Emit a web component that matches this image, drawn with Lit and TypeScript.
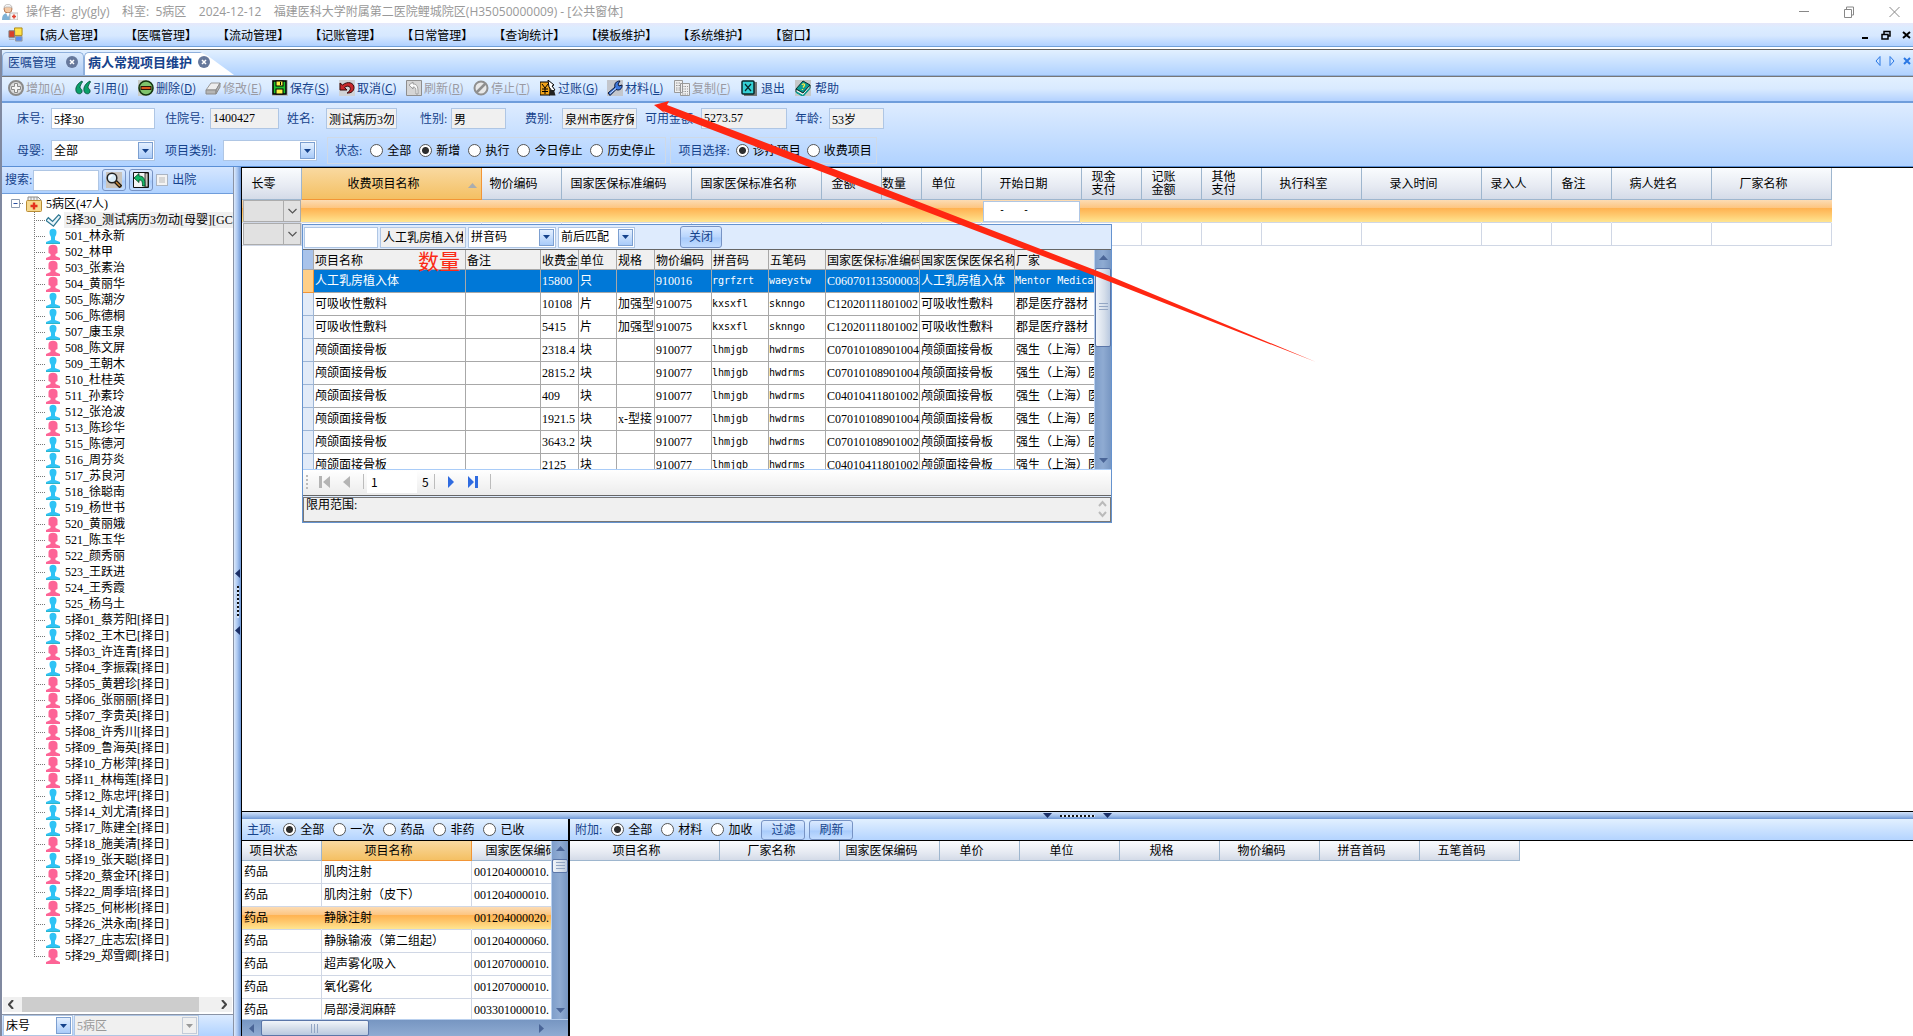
import { LitElement, html, svg, css, nothing } from "lit";
import { customElement } from "lit/decorators.js";
import { classMap } from "lit/directives/class-map.js";
import { styleMap } from "lit/directives/style-map.js";

interface Column { title: string; width: number; sorted?: boolean }

const MENUS = ["病人管理", "医嘱管理", "流动管理", "记账管理", "日常管理", "查询统计", "模板维护", "系统维护", "窗口"];

const TOOLS: { icon: string; text: string; key?: string; off?: boolean; size?: string }[] = [
  { icon: "add", text: "增加", key: "A", off: true },
  { icon: "quote", text: "引用", key: "I", size: "narrow" },
  { icon: "remove", text: "删除", key: "D" },
  { icon: "edit", text: "修改", key: "E", off: true },
  { icon: "save", text: "保存", key: "S" },
  { icon: "undo", text: "取消", key: "C" },
  { icon: "reload", text: "刷新", key: "R", off: true },
  { icon: "stop", text: "停止", key: "T", off: true },
  { icon: "post", text: "过账", key: "G" },
  { icon: "wrench", text: "材料", key: "L" },
  { icon: "copy", text: "复制", key: "F", off: true },
  { icon: "exit", text: "退出", size: "short" },
  { icon: "help", text: "帮助", size: "short" },
];

const ICONS: Record<string, unknown> = {
  add: svg`<circle cx="8" cy="8" r="7" fill="#dcdcdc" stroke="#8a8a8a" stroke-width="2"/><path d="M6.5 3.5h3v3h3v3h-3v3h-3v-3h-3v-3h3z" fill="#f4f4f4" stroke="#8a8a8a"/>`,
  quote: svg`<path d="M7 1C3 3 0 7 1 11c.5 3 5 4 6 1 .6-2-1-3.500-2-4 0-2 1-4 2.500-6z" fill="#0aa06a" stroke="#064d38" stroke-width=".8"/><path d="M15 1c-4 2-7 6-6 10 .5 3 5 4 6 1 .6-2-1-3.500-2-4 0-2 1-4 2.500-6z" fill="#0aa06a" stroke="#064d38" stroke-width=".8"/>`,
  remove: svg`<rect width="9" height="16" fill="#c8ccc8"/><circle cx="8" cy="8" r="7" fill="#7fc36c" stroke="#14350f" stroke-width="1.600"/><rect x="3" y="6.500" width="10" height="3" fill="#d8571c" stroke="#2b1408"/>`,
  edit: svg`<path d="M1 10l5-7h9l-4 7z" fill="#eee" stroke="#999"/><path d="M1 10h10v4H1zM11 10l4-7v4l-4 7z" fill="#b5b5b5" stroke="#8b8b8b"/>`,
  save: svg`<rect width="16" height="16" fill="#b9bcc0"/><path d="M1 1h13v13H1z" fill="#1fc02c" stroke="#000" stroke-width="1.500"/><rect x="4" y="1" width="7" height="5" fill="#fff34a" stroke="#000"/><rect x="4" y="9" width="7" height="5" fill="#fff34a" stroke="#000"/><path d="M8.500 2v3" stroke="#000"/>`,
  undo: svg`<rect width="16" height="16" fill="#cfd2d6"/><path d="M1 3v7h7L5.500 7.500C9 4.500 12.500 7 11 10c-.6 1.500-2 2.500-3 3 4 .5 7-2 7-5.500C15 3 9 .5 3.500 5z" fill="#c7282c" stroke="#35080a"/>`,
  reload: svg`<path d="M.5.5h15v15H.5z" fill="#d5d5d5" stroke="#8e8e8e"/><path d="M3 5l4-3v2c5 0 5 4 5 10h-2c0-5 0-7-3-7v2z" fill="#fafafa" stroke="#8e8e8e" stroke-width=".8"/>`,
  stop: svg`<circle cx="8" cy="8" r="6.500" fill="#e8e8e8" stroke="#8f8f8f" stroke-width="2"/><path d="M3.500 12.500l9-9" stroke="#8f8f8f" stroke-width="2.500"/>`,
  post: svg`<path d="M0 2h10v13H0z" fill="#f0a31b" stroke="#000"/><path d="M2 4l3 4 3-4M2 9h6M2 11.500h6M5 8v6" stroke="#000" fill="none"/><path d="M8 0l6 5-2 1 3 4-3 1-3-4z" fill="#fff" stroke="#000"/><path d="M10 10h4l1.500 5.500H9z" fill="#222"/>`,
  wrench: svg`<rect width="16" height="16" fill="#c3c6cc"/><path d="M1 13l7-6c-1-3 1-6 5-6l-2 3 1 2 3-1c.5 4-3 6-6 4.500L3 15.500z" fill="#3f79dc" stroke="#0a1536"/><path d="M3 13.500l6-5" stroke="#cfe2ff"/>`,
  copy: svg`<path d="M.5.5h8v12h-8zM6.500 3.500h9v12h-9z" fill="#efefef" stroke="#999"/><path d="M2 3h5M2 5.500h4M2 8h4M2 10h4M8 6.500h6M8 9h6M8 11.500h6M8 14h6" stroke="#999" stroke-dasharray="1.500 1"/>`,
  exit: svg`<rect x="3" y="2" width="13" height="14" fill="#777"/><rect x="1" y="1" width="12" height="13" rx="1" fill="#35d0d6" stroke="#07282b" stroke-width="1.500"/><path d="M4 4l6 7M10 4l-6 7" stroke="#07282b" stroke-width="1.200"/>`,
  help: svg`<rect width="16" height="16" fill="#c6c9c9"/><path d="M1 9l7-8 7 4-7 8z" fill="#0c9d93" stroke="#04312e"/><path d="M1 9v3l7 4 7-8V5l-7 8z" fill="#f2f2f2" stroke="#04312e"/><path d="M1 12l7 4 7-8" stroke="#0c9d93" stroke-width="1.500" fill="none"/><path d="M7 5c1-2 3-1 2.500.5L8 7.500M7.500 9v1" stroke="#ffe840" stroke-width="1.300" fill="none"/>`,
  nurse: svg`<circle cx="6" cy="5" r="4" fill="#f3c9a5" stroke="#b97b55"/><path d="M2 4c0-5 8-5 8 0L8 3H4z" fill="#f5f5f5" stroke="#aaa" stroke-width=".6"/><path d="M0 16c0-5 2-7 6-7s5 2 6 7z" fill="#7fb2d6"/><path d="M4 9l2 4 2-4z" fill="#fff"/><rect x="8" y="9" width="8" height="7" fill="#f4f4f4" stroke="#b9b9b9"/><path d="M12 10.500v4M10 12.500h4" stroke="#e0402e" stroke-width="1.600"/>`,
  forms: svg`<path d="M7 1h8v8H7z" fill="#ffe24a" stroke="#ab8410"/><path d="M1 4h6v7H1z" fill="#d8402a" stroke="#7d7d7d"/><path d="M8 10h7v5H8z" fill="#5a8ef0" stroke="#9a9a9a"/><path d="M1 13h6" stroke="#9a9a9a"/>`,
  search: svg`<rect width="16" height="16" fill="#c9c4bd"/><path d="M9 9l6 6" stroke="#221b12" stroke-width="4"/><path d="M10 10l4 4" stroke="#c98b3b" stroke-width="1.500"/><circle cx="6" cy="6" r="4.800" fill="#d8ecf8" stroke="#222" stroke-width="1.500"/><path d="M3.500 6.500c0-2 1.500-3 3-3" stroke="#fff" stroke-width="1.500" fill="none"/>`,
  back: svg`<path d="M.5.5h15v15H.5z" fill="#f4f4f4" stroke="#111"/><path d="M12 1h3v14h-3z" fill="#c9c4bd" stroke="#111" stroke-width=".8"/><path d="M1 6l5-4.500v2.500c5 0 6 3 6 10H9.500C9.500 9.500 9 8 6 8v2.500z" fill="#13b765" stroke="#053d21" stroke-width=".8"/>`,
  ward: svg`<path d="M2 5V1h10l3 3v5" fill="#f1f1f1" stroke="#8a8a8a"/><path d="M5 1v4M8 1v4M11 1v4" stroke="#999"/><rect x=".5" y="4.500" width="15" height="11" rx="1" fill="#f7d98e" stroke="#b98d35"/><path d="M8 6.500v7M4.500 10h7" stroke="#e4311d" stroke-width="2.400"/>`,
  check: svg`<path d="M0 8l2.500-3L7 9l6.500-7L16 4 8 14z" fill="#eaf6fb" stroke="#2c7691" stroke-width="1.300"/>`,
};

const icon = (name: string, size = 16) =>
  html`<svg class="ico" width=${size} height=${size} viewBox="0 0 16 16" aria-hidden="true">${ICONS[name]}</svg>`;

const person = (female: boolean) => female
  ? html`<svg class="ico" width="14" height="16" viewBox="0 0 14 16"><path d="M2.500 8V4C2.500-.5 11.500-.5 11.500 4v5L9.500 10v2l4.500 2V16H0v-2l4.500-2v-2L2.500 9z" fill="#fd6496"/></svg>`
  : html`<svg class="ico" width="14" height="16" viewBox="0 0 14 16"><path d="M3.500 4C3.500-.3 10.500-.3 10.500 4c0 2-.5 3.500-1.500 5v3l5 2v2H0v-2l5-2V9C4 7.500 3.500 6 3.500 4z" fill="#2fc3f5"/><path d="M0 15h14v1H0z" fill="#2fb5c8"/></svg>`;

const tri = (dir: "up" | "down" | "left" | "right", color = "#4a6597") => {
  const d = { up: "M0 6l4.500-5L9 6z", down: "M0 2h9L4.500 7z", left: "M7 0v9L2 4.500z", right: "M2 0v9l5-4.500z" }[dir];
  return html`<svg class="ico" width="9" height="9" viewBox="0 0 9 9"><path d=${d} fill=${color}/></svg>`;
};

const combo = (label: string, value: string, kind: string, disabled = false) => html`
  <span class="combo ${kind}">
    <select aria-label=${label} ?disabled=${disabled}><option>${value}</option></select>
    <span class="drop ${disabled ? "off" : ""}"><svg width="7" height="4" viewBox="0 0 7 4"><path d="M0 0h7L3.500 4z" fill="currentColor"/></svg></span>
  </span>`;

const radios = (name: string, items: string[], on: number) => items.map((t, i) => html`
  <label class="radio"><input type="radio" name=${name} ?checked=${i === on}>${t}</label>`);

const cols = (list: Column[]) => html`<colgroup>${list.map(c => html`<col style=${styleMap({ width: c.width + "px" })}>`)}</colgroup>`;
const total = (list: Column[]) => styleMap({ width: list.reduce((n, c) => n + c.width, 0) + "px" });

const ORDER_COLS: Column[] = [
  { title: "长零", width: 60 }, { title: "收费项目名称", width: 180, sorted: true }, { title: "物价编码", width: 80 },
  { title: "国家医保标准编码", width: 130 }, { title: "国家医保标准名称", width: 130 }, { title: "金额", width: 60 },
  { title: "数量", width: 40 }, { title: "单位", width: 60 }, { title: "开始日期", width: 100 },
  { title: "现金\n支付", width: 60 }, { title: "记账\n金额", width: 60 }, { title: "其他\n支付", width: 60 },
  { title: "执行科室", width: 100 }, { title: "录入时间", width: 120 }, { title: "录入人", width: 70 },
  { title: "备注", width: 60 }, { title: "病人姓名", width: 100 }, { title: "厂家名称", width: 120 },
];
const DATE_COL = 8;

const ITEM_COLS: Column[] = [
  { title: "项目状态", width: 80 }, { title: "项目名称", width: 150, sorted: true }, { title: "国家医保编码", width: 116 },
];
const ITEMS = [
  ["肌肉注射", "001204000010."], ["肌肉注射（皮下）", "001204000010."], ["静脉注射", "001204000020."],
  ["静脉输液（第二组起）", "001204000060."], ["超声雾化吸入", "001207000010."], ["氧化雾化", "001207000010."],
  ["局部浸润麻醉", "003301000010."],
];
const EXTRA_COLS: Column[] = [
  { title: "项目名称", width: 150 }, { title: "厂家名称", width: 120 }, { title: "国家医保编码", width: 100 },
  { title: "单价", width: 80 }, { title: "单位", width: 100 }, { title: "规格", width: 100 },
  { title: "物价编码", width: 100 }, { title: "拼音首码", width: 100 }, { title: "五笔首码", width: 100 },
];

const PICK_COLS: Column[] = [
  { title: "", width: 11 }, { title: "项目名称", width: 152 }, { title: "备注", width: 75 }, { title: "收费金", width: 38 },
  { title: "单位", width: 38 }, { title: "规格", width: 38 }, { title: "物价编码", width: 57 }, { title: "拼音码", width: 57 },
  { title: "五笔码", width: 57 }, { title: "国家医保标准编码", width: 94 }, { title: "国家医保医保名称", width: 95 },
  { title: "厂家", width: 80 },
];
const bone = (price: string, code: string, spec = "") =>
  ["颅颌面接骨板", "", price, "块", spec, "910077", "lhmjgb", "hwdrms", code, "颅颌面接骨板", "强生（上海）医疗"];
const PICKS = [
  ["人工乳房植入体", "", "15800", "只", "", "910016", "rgrfzrt", "waeystw", "C060701135000030", "人工乳房植入体", "Mentor Medical"],
  ["可吸收性敷料", "", "10108", "片", "加强型", "910075", "kxsxfl", "sknngo", "C120201118010021", "可吸收性敷料", "郡是医疗器材"],
  ["可吸收性敷料", "", "5415", "片", "加强型", "910075", "kxsxfl", "sknngo", "C120201118010021", "可吸收性敷料", "郡是医疗器材"],
  bone("2318.4", "C070101089010040"), bone("2815.2", "C070101089010040"), bone("409", "C040104118010020"),
  bone("1921.5", "C070101089010040", "x-型接"), bone("3643.2", "C070101089010020"), bone("2125", "C040104118010020"),
];

/* "f" marks a female patient, "m" a male one. */
const PATIENTS = `m501_林永新 f502_林甲 f503_张素治 f504_黄丽华 m505_陈潮汐 m506_陈德桐 m507_康玉泉 f508_陈文屏 m509_王朝木
f510_杜桂英 f511_孙素玲 m512_张沧波 f513_陈珍华 m515_陈德河 m516_周芬炎 m517_苏良河 m518_徐聪南 m519_杨世书 f520_黄丽娥
f521_陈玉华 f522_颜秀丽 m523_王跃进 f524_王秀霞 m525_杨乌土 m5择01_蔡芳阳[择日] m5择02_王木已[择日] f5择03_许连青[择日]
m5择04_李振霖[择日] f5择05_黄碧珍[择日] f5择06_张丽丽[择日] f5择07_李贵英[择日] f5择08_许秀川[择日] f5择09_鲁海英[择日]
f5择10_方彬萍[择日] f5择11_林梅莲[择日] m5择12_陈忠坪[择日] m5择14_刘尤清[择日] m5择17_陈建全[择日] f5择18_施美清[择日]
m5择19_张天聪[择日] f5择20_蔡金环[择日] m5择22_周季培[择日] f5择25_何彬彬[择日] m5择26_洪永南[择日] m5择27_庄志宏[择日]
f5择29_郑雪卿[择日]`.split(/\s+/);

const FIELDS = [
  { id: "bed", label: "床号", value: "5择30", lead: 0, cap: 34, box: 104, edit: true },
  { id: "inno", label: "住院号", value: "1400427", lead: 10, cap: 45, box: 69 },
  { id: "name", label: "姓名", value: "测试病历3勿动", lead: 8, cap: 39, box: 71 },
  { id: "sex", label: "性别", value: "男", lead: 23, cap: 31, box: 55 },
  { id: "fee", label: "费别", value: "泉州市医疗保险", lead: 19, cap: 37, box: 75 },
  { id: "money", label: "可用金额", value: "5273.57", lead: 8, cap: 56, box: 86 },
  { id: "age", label: "年龄", value: "53岁", lead: 8, cap: 34, box: 55 },
];

@customElement("app-root")
export class AppRoot extends LitElement {
  static styles = css`
    :host { display: flex; flex-direction: column; position: relative; height: 100vh; overflow: hidden; background: #fff; color: #000;
      font: 12px/14px "Liberation Serif", "Noto Sans CJK SC", serif; }
    * { box-sizing: border-box; }
    button, input, select { font: inherit; color: inherit; margin: 0; border-radius: 0; outline: none; }
    button { border: 0; padding: 0; background: none; white-space: nowrap; }
    .ico { flex: none; display: block; }
    .titlebar { display: flex; align-items: center; height: 23px; padding: 0 13px 0 2px; gap: 8px; color: #999;
      font-family: "Open Sans", "Noto Sans CJK SC", sans-serif; white-space: pre; }
    .titlebar .wins { margin-left: auto; display: flex; gap: 34px; align-items: center; }
    .menubar { display: flex; align-items: center; height: 24px; padding: 0 2px 0 8px; border-bottom: 1px solid #6f9fd8;
      background: linear-gradient(#e6e8fa 0, #dcecff 20%, #d7e8ff 55%, #b0d1ff); font-family: "Noto Sans CJK SC", sans-serif; }
    .menubar nav { display: flex; }
    .menubar a { padding: 0 10px; color: #000; text-decoration: none; }
    .menubar .wins { margin-left: auto; display: flex; gap: 11px; }
    .client { flex: 1; min-height: 0; display: flex; flex-direction: column; margin-top: 2px; border-top: 1px solid #5f5f5f;
      border-left: 2px solid #8089a0; }
    .tabs { display: flex; align-items: flex-end; height: 26px; flex: none; border-bottom: 1px solid #8fb0dc; background: linear-gradient(#e2f0ff, #b0d2ff);
      color: #15428b; font-family: "Noto Sans CJK SC", sans-serif; }
    .tab { display: flex; align-items: center; gap: 6px; height: 23px; padding: 0 5px 4px; border: 1px solid #8fb0dc; border-bottom: 0;
      border-radius: 5px 5px 0 0; background: linear-gradient(#dcebfd, #aecbf3); }
    .tab.on { background: #fff; font-weight: bold; font-size: 13px; padding: 0 24px 4px 3px; border-radius: 5px 0 0 0; border-right: 0;
      clip-path: polygon(0 0, 116px 0, 124px 4px, 100% 100%, 0 100%); }
    .tab:first-child { width: 82px; justify-content: space-between; }
    .tabs .ctl { margin-left: auto; display: flex; gap: 8px; padding: 0 2px 9px 0; }
    .tools { display: flex; align-items: center; flex: none; height: 27px; padding: 0 0 2px 6px; border-top: 1px solid #777; border-bottom: 2px solid #6f9ddb;
      background: linear-gradient(#e2f0ff, #d9eaff 50%, #b4d2ff); color: #15428b; font-family: "Noto Sans CJK SC", sans-serif; }
    .tools button { display: flex; align-items: center; gap: 2px; width: 67px; height: 20px; }
    .tools button.narrow { width: 63px; }
    .tools button.short { width: 54px; gap: 4px; }
    .tools button:disabled { color: #9a9aa2; }
    .filters { flex: none; height: 64px; padding: 5px 0 2px 15px; display: flex; flex-direction: column; justify-content: space-between;
      background: linear-gradient(#deecff, #b0d2ff); border-bottom: 1px solid #5a8fd6; color: #15428b; }
    .line { display: flex; align-items: center; }
    .field { display: flex; align-items: center; }
    .field label { flex: none; }
    .box { height: 21px; padding: 0 2px; border: 1px solid #afc6e4; background: #fff; color: #000; min-width: 0; }
    .box[readonly] { background: #f0f0f0; }
    .combo { display: grid; height: 21px; border: 1px solid #afc6e4; background: #fff; color: #000; }
    .combo > * { grid-area: 1 / 1; }
    .combo select { appearance: none; border: 0; background: none; padding: 0 2px; width: 100%; }
    .combo .drop { justify-self: end; align-self: center; display: flex; align-items: center; justify-content: center; width: 15px; height: 17px; margin-right: 1px;
      border: 1px solid #7c9fd0; background: linear-gradient(#e4f0ff, #a9cbf9); color: #15428b; pointer-events: none; }
    .combo .drop.off { border-color: #c3cbd8; background: #f0f0f0; color: #999; }
    .combo select:disabled { color: #999; opacity: 1; }
    .w104 { width: 104px; } .w94 { width: 94px; } .w88 { width: 88px; } .w77 { width: 77px; } .w70 { width: 70px; }
    .w125 { width: 125px; background: #f0f0f0; }
    .cap-s { width: 34px; } .cap-l { width: 68px; padding-left: 10px; }
    .group { display: flex; align-items: center; height: 27px; padding: 0 4px 0 7px; border: 1px solid #cfd9e6; gap: 6px; }
    .group.first { margin: 0 4px 0 10px; padding: 0 10px 0 7px; gap: 8px; }
    .radio { display: flex; align-items: center; gap: 4px; color: #000; white-space: nowrap; }
    input[type="radio"] { appearance: none; width: 13px; height: 13px; border: 1px solid #555; border-radius: 50%; background: #fff; }
    input[type="radio"]:checked { background: radial-gradient(circle, #2d2d2d 3px, #fff 4px); }
    .work { flex: 1; min-height: 0; display: flex; }
    .side { width: 232px; flex: none; display: flex; flex-direction: column; border-right: 1px solid #8a93a5; }
    .find { display: flex; align-items: center; flex: none; height: 27px; padding-left: 3px; border-bottom: 1px solid #6f9ddb; color: #15428b;
      background: linear-gradient(#d5e6ff, #b0d2ff); }
    .find .box { width: 66px; margin: 0 3px 0 1px; }
    .push { display: flex; align-items: center; justify-content: center; height: 22px; border: 1px solid #7793c4; border-radius: 3px; color: #15428b;
      background: linear-gradient(#dbeaff, #b8d5fd 50%, #a8cbfb 55%, #c2dcff); }
    .find .push { width: 24px; margin-right: 3px; }
    .find label { display: flex; align-items: center; gap: 4px; }
    .find input[type="checkbox"] { appearance: none; width: 12px; height: 12px; border: 1px solid #aab4c2; background: #d6d6d6; box-shadow: inset 0 0 0 2px #f3f3f3; }
    .tree { flex: 1; min-height: 0; margin: 0; padding: 2px 0 0; overflow: hidden; list-style: none; white-space: nowrap; }
    .tree ul { margin: 0; padding: 0; list-style: none; }
    .tree li { height: 16px; }
    .tree li.root { height: auto; }
    .knot { display: flex; align-items: center; height: 16px; }
    .root > .knot { padding-left: 9px; gap: 2px; }
    .stem { flex: none; width: 11px; height: 16px; margin: 0 1px 0 32px;
      background: repeating-linear-gradient(90deg, #777 0 1px, transparent 1px 2px) 0 8px / 100% 1px no-repeat,
        repeating-linear-gradient(#777 0 1px, transparent 1px 2px) 0 0 / 1px 100% no-repeat; }
    li:last-child > .knot .stem { background-size: 100% 1px, 1px 8px; }
    .knot .name { padding: 0 2px; line-height: 16px; }
    .knot .stem ~ .name { margin-left: 3px; }
    .knot.sel .name { flex: 1; background: #f0f0f0; overflow: hidden; }
    .hbar { display: flex; align-items: center; flex: none; height: 15px; margin: 0 1px 2px; padding: 0 5px; background: #f0f0f0; }
    .hbar i { flex: 1; height: 15px; margin: 0 22px 0 8px; background: #cdcdcd; }
    .foot { display: flex; flex: none; height: 22px; padding: 0 0 0 1px; gap: 1px; border-top: 1px solid #8a93a5; background: linear-gradient(#dcebff, #b0d2ff); }
    .vsplit { width: 7px; flex: none; display: flex; flex-direction: column; align-items: center; justify-content: center; gap: 8px;
      background: linear-gradient(90deg, #dce9fb, #a9c6f0 50%, #6d96d4); }
    .vsplit i { width: 2px; height: 32px; background: repeating-linear-gradient(#111 0 2px, #dce9fb 2px 4px); }
    .main { flex: 1; min-width: 0; display: flex; flex-direction: column; border-left: 1px solid #000; }
    .orders { flex: 1; min-height: 0; position: relative; border-top: 1px solid #000; border-bottom: 1px solid #000; }
    table { border-collapse: separate; border-spacing: 0; table-layout: fixed; }
    th, td { padding: 0; overflow: hidden; white-space: nowrap; font-weight: normal; text-align: left; }
    .grid th { text-align: center; padding: 1px 16px 0 0; white-space: pre; line-height: 13px; border-right: 1px solid #9eb6ce; border-bottom: 1px solid #9eb6ce;
      background: linear-gradient(#fafcfe, #e6eaf2 60%, #d4dbe8); }
    .grid th.sorted { background: linear-gradient(#f9d9a0, #f4c063); border-color: #f29536; }
    .grid th .sort { float: right; margin: 4px -12px 0 0; }
    .grid td { height: 23px; border-right: 1px solid #d0d7e5; border-bottom: 1px solid #d0d7e5; padding-left: 2px; }
    .grid tr.cur td { background: linear-gradient(#fcdcb4, #fdc47e 36%, #ffb352 37%, #ffc96e 65%, #ffe996); border-right-color: transparent; background-origin: border-box; }
    .orders th { height: 32px; }
    .orders .grid td { padding: 0; }
    .cellcombo { display: grid; height: 22px; margin-left: 1px; border: 1px solid #acacac; background: #e1e1e1; }
    .cellcombo select { grid-area: 1 / 1; appearance: none; border: 0; background: none; width: 100%; }
    .cellcombo span { grid-area: 1 / 1; justify-self: end; width: 17px; border-left: 1px solid #acacac; display: flex; align-items: center; justify-content: center; pointer-events: none; }
    .date { width: 97px; height: 21px; margin: 0 1px; border: 1px solid #afc6e4; background: #fff; padding: 0 0 4px 15px; font: 10px/14px "DejaVu Sans Mono", monospace; }
    .popup { position: absolute; left: 60px; top: 56px; width: 810px; border: 1px solid #6593cf; background: #deebfd; }
    .poptools { display: flex; align-items: center; height: 24px; padding-left: 1px; gap: 2px; }
    .poptools .push { width: 42px; margin-left: 43px; }
    .w74 { width: 74px; } .w87 { width: 86px; }
    .pick { display: flex; height: 220px; border-top: 1px solid #666; background: #fff; }
    .rows { flex: 1; min-width: 0; overflow: hidden; }
    .pick th { height: 20px; background: #f0f0f0; border-right: 1px solid #a8a8a8; border-bottom: 1px solid #a8a8a8; padding: 3px 0 0 1px; }
    .pick td { height: 23px; border-right: 1px solid #a8a8a8; border-bottom: 1px solid #a8a8a8; padding-left: 1px; }
    .pick td.head { background: #e2ebf8; border-color: #9db5d5; }
    .pick th.head { background: #a9c3ea; }
    .pick tr.cur td { background: #0078d7; color: #fff; }
    .pick tr.cur td.head { background: #ffcf87; border-color: #f29536; }
    .pick td.mono { font: 10px/14px "DejaVu Sans Mono", "Noto Sans CJK SC", monospace; padding-left: 0; }
    .vbar { flex: none; width: 17px; display: flex; flex-direction: column; align-items: center; justify-content: space-between; padding: 4px 0;
      background: linear-gradient(90deg, #7f9fcb, #8fabd2 50%, #7796c2); border-left: 1px solid #b9d0ee; }
    .thumb { display: flex; align-items: center; justify-content: center; border: 1px solid #5b76a8; border-radius: 2px;
      background: linear-gradient(90deg, #f1f5fa, #d5deea 60%, #b9c9e0); }
    .thumb::before { content: ""; width: 9px; height: 9px; background: repeating-linear-gradient(#93a6c4 0 1px, transparent 1px 3px); }
    .vbar .thumb { width: 16px; height: 14px; }
    .vbar .thumb.tall { height: 79px; }
    .vbar .room { flex: 1; }
    .vbar .top { margin-bottom: 5px; }
    .pager { display: flex; align-items: center; height: 27px; gap: 9px; padding: 0 0 2px 3px; border-top: 1px solid #a9ccf8; border-bottom: 1px solid #666; background: linear-gradient(#fff, #ececec); font-family: "Noto Sans CJK SC", sans-serif; }
    .pager .grip { width: 2px; height: 14px; background: repeating-linear-gradient(#bbb 0 2px, transparent 2px 4px); }
    .pager .bar { width: 1px; height: 15px; background: #bcbcbc; }
    .pager button { width: 14px; display: flex; justify-content: center; }
    .pager input { width: 50px; height: 22px; border: 0; background: #fff; padding: 0 4px; margin-left: -6px; }
    .pager .pages { margin: 0 -4px; }
    .note { display: flex; justify-content: space-between; height: 25px; margin-top: 1px; padding: 0 3px 0 2px; border: 1px solid #777; background: #f0f0f0; }
    .mark { position: absolute; left: 176px; top: 80px; font: 21px/24px "Noto Sans CJK SC", sans-serif; color: #fb2a16; }
    .hsplit { flex: none; height: 7px; display: flex; align-items: center; justify-content: center; gap: 8px;
      background: linear-gradient(#d3e3fa, #9cbbe8 60%, #6d96d4); }
    .hsplit i { width: 35px; height: 2px; background: repeating-linear-gradient(90deg, #111 0 2px, #dce9fb 2px 4px); }
    .bottom { flex: none; height: 217px; display: flex; }
    .left { flex: none; width: 326px; display: flex; flex-direction: column; }
    .right { flex: 1; min-width: 0; border-left: 2px solid #000; }
    .strip { display: flex; align-items: center; flex: none; gap: 9px; height: 22px; padding-left: 5px; border-bottom: 1px solid #000; color: #15428b;
      background: linear-gradient(#e2f0ff, #b4d4ff); }
    .strip .push { width: 44px; height: 20px; margin-right: -5px; }
    .bottom th { height: 20px; }
    .body { flex: 1; min-height: 0; display: flex; }
    .lbar { flex: none; height: 17px; display: flex; align-items: center; gap: 5px; padding: 0 22px 0 5px; background: linear-gradient(#7796c2, #8fabd2); border-top: 1px solid #b9d0ee; }
    .lbar .thumb { width: 108px; height: 16px; margin-right: auto; background: linear-gradient(#f1f5fa, #d5deea 50%, #b9c9e0); }
    .lbar .thumb::before { background: repeating-linear-gradient(90deg, #93a6c4 0 1px, transparent 1px 3px); }
    .arrow { position: absolute; left: 650px; top: 98px; pointer-events: none; }
  `;

  private header(list: Column[]) {
    return html`<thead><tr>${list.map(c => html`<th class=${classMap({ sorted: !!c.sorted })}>${c.sorted && list === ORDER_COLS
      ? html`<span class="sort">${tri("up", "#a9adb0")}</span>` : nothing}${c.title}</th>`)}</tr></thead>`;
  }

  private chrome() {
    return html`
      <header class="titlebar">${icon("nurse")}<span>操作者:  gly(gly)    科室:  5病区    2024-12-12    福建医科大学附属第二医院鲤城院区(H35050000009) - [公共窗体]</span>
        <span class="wins">
          <svg width="11" height="12"><path d="M0 5.500h10" stroke="#888"/></svg>
          <svg width="11" height="12"><path d="M.5 3.500h7v8h-7zM2.500 3V1h7v8H8" fill="none" stroke="#888"/></svg>
          <svg width="11" height="12"><path d="M.5 1l10 10M10.500 1l-10 10" stroke="#888"/></svg>
        </span>
      </header>
      <div class="menubar">${icon("forms", 15)}
        <nav>${MENUS.map(m => html`<a href="#">【${m}】</a>`)}</nav>
        <span class="wins">
          <svg width="9" height="10"><path d="M1 8h6" stroke="#000" stroke-width="2"/></svg>
          <svg width="10" height="10"><path d="M1 4.500h6v4.500H1zM3 4V1.500h6V6H7.500" fill="none" stroke="#000" stroke-width="1.500"/></svg>
          <svg width="9" height="10"><path d="M1 2l7 6M8 2L1 8" stroke="#000" stroke-width="2"/></svg>
        </span>
      </div>`;
  }

  private closeDot() {
    return html`<svg class="ico" width="12" height="12" viewBox="0 0 12 12"><circle cx="6" cy="6" r="6" fill="#66789b"/><path d="M4 4l4 4M8 4l-4 4" stroke="#fff" stroke-width="1.500"/></svg>`;
  }

  private sidebar() {
    return html`<aside class="side">
      <div class="find"><label for="find">搜索:</label><input id="find" class="box">
        <button class="push" aria-label="搜索">${icon("search")}</button><button class="push" aria-label="返回">${icon("back")}</button>
        <label><input type="checkbox">出院</label></div>
      <ul class="tree"><li class="root">
        <div class="knot"><svg class="ico" width="13" height="10"><path d="M.5.5h8v8h-8z" fill="#fff" stroke="#8c9bb0"/><path d="M2.500 4.500h4" stroke="#2a4fa0"/><path d="M9 4.500h4" stroke="#777" stroke-dasharray="1 1"/></svg>${icon("ward")}<span class="name">5病区(47人)</span></div>
        <ul>
          <li><div class="knot sel"><span class="stem"></span>${icon("check", 15)}<span class="name">5择30_测试病历3勿动[母婴][GCP]</span></div></li>
          ${PATIENTS.map(p => html`<li><div class="knot"><span class="stem"></span>${person(p[0] === "f")}<span class="name">${p.slice(1)}</span></div></li>`)}
        </ul></li></ul>
      <div class="hbar"><svg width="6" height="9"><path d="M5 0L1 4.500 5 9" fill="none" stroke="#444" stroke-width="2"/></svg><i></i><svg width="6" height="9"><path d="M1 0l4 4.500L1 9" fill="none" stroke="#444" stroke-width="2"/></svg></div>
      <div class="foot">${combo("排序", "床号", "w70")}${combo("病区", "5病区", "w125", true)}</div>
    </aside>`;
  }

  private popup() {
    return html`<section class="popup">
      <div class="poptools">
        <input class="box w74" aria-label="检索"><input class="box w87" aria-label="选中项目" readonly value="人工乳房植入体">
        ${combo("检索方式", "拼音码", "w88")}${combo("匹配方式", "前后匹配", "w77")}
        <button class="push">关闭</button>
      </div>
      <div class="pick">
        <div class="rows"><table style=${total(PICK_COLS)}>${cols(PICK_COLS)}
          <thead><tr>${PICK_COLS.map((c, i) => html`<th class=${i ? "" : "head"}>${c.title}</th>`)}</tr></thead>
          <tbody>${PICKS.map((r, n) => html`<tr class=${n ? "" : "cur"}><td class="head"></td>
            ${r.map(v => html`<td class=${/^[a-z]+$|^Men/.test(v) ? "mono" : ""}>${v}</td>`)}</tr>`)}</tbody>
        </table></div>
        <div class="vbar"><span class="top">${tri("up")}</span><span class="thumb tall"></span><span class="room"></span>${tri("down")}</div>
      </div>
      <div class="pager"><i class="grip"></i>
        <button aria-label="首页"><svg width="11" height="12"><path d="M0 0h3v12H0zM11 0v12L4 6z" fill="#b4b4b4"/></svg></button>
        <button aria-label="上一页"><svg width="8" height="12"><path d="M7 0v12L0 6z" fill="#b4b4b4"/></svg></button>
        <i class="bar"></i><input aria-label="页码" value="1"><span class="pages">5</span><i class="bar"></i>
        <button aria-label="下一页"><svg width="8" height="12"><path d="M1 0v12l6-6z" fill="#2f6be0"/></svg></button>
        <button aria-label="末页"><svg width="11" height="12"><path d="M0 0v12l6-6zM7 0h3v12H7z" fill="#2f6be0"/></svg></button>
        <i class="bar"></i>
      </div>
      <div class="note"><span>限用范围:</span><svg width="9" height="20"><path d="M1 8l3.500-4L8 8M1 14l3.500 4L8 14" fill="none" stroke="#bbb" stroke-width="2"/></svg></div>
    </section>`;
  }

  private cellCombo() {
    return html`<div class="cellcombo"><select aria-label="长零"><option></option></select><span><svg width="9" height="6"><path d="M.5 1l4 4 4-4" fill="none" stroke="#555" stroke-width="1.200"/></svg></span></div>`;
  }

  render() {
    return html`${this.chrome()}
    <div class="client">
      <div class="tabs">
        <div class="tab"><span>医嘱管理</span>${this.closeDot()}</div>
        <div class="tab on"><span>病人常规项目维护</span>${this.closeDot()}</div>
        <span class="ctl">
          <svg width="6" height="10"><path d="M5 .5v9L1 5z" fill="none" stroke="#2b78e4"/></svg>
          <svg width="6" height="10"><path d="M1 .5v9L5 5z" fill="none" stroke="#2b78e4"/></svg>
          <svg width="8" height="10"><path d="M1 2l6 6M7 2L1 8" stroke="#2b78e4" stroke-width="2"/></svg>
        </span>
      </div>
      <div class="tools">${TOOLS.map(t => html`<button class=${t.size ?? ""} ?disabled=${t.off}>${icon(t.icon)}<span>${t.text}${t.key ? html`(<u>${t.key}</u>)` : nothing}</span></button>`)}</div>
      <div class="filters">
        <div class="line">${FIELDS.map(f => html`<div class="field">
          <label for=${f.id} style=${styleMap({ width: f.cap + "px", marginLeft: f.lead + "px" })}>${f.label}:</label>
          <input id=${f.id} class="box" style=${styleMap({ width: f.box + "px" })} ?readonly=${!f.edit} value=${f.value}></div>`)}</div>
        <div class="line">
          <span class="cap-s">母婴:</span>${combo("母婴", "全部", "w104")}
          <span class="cap-l">项目类别:</span>${combo("项目类别", "", "w94")}
          <div class="group first"><span>状态:</span>${radios("state", ["全部", "新增", "执行", "今日停止", "历史停止"], 1)}</div>
          <div class="group"><span>项目选择:</span>${radios("kind", ["诊疗项目", "收费项目"], 0)}</div>
        </div>
      </div>
      <div class="work">
        ${this.sidebar()}
        <div class="vsplit">${tri("left", "#1b2f66")}<i></i>${tri("left", "#1b2f66")}</div>
        <div class="main">
          <div class="orders">
            <table class="grid" style=${total(ORDER_COLS)}>${cols(ORDER_COLS)}${this.header(ORDER_COLS)}
              <tbody>${[0, 1].map(n => html`<tr class=${n ? "" : "cur"}>${ORDER_COLS.map((_, i) => html`<td>${i === 0 ? this.cellCombo()
                : i === DATE_COL && n === 0 ? html`<input class="date" aria-label="开始日期" value="-   -">` : nothing}</td>`)}</tr>`)}</tbody>
            </table>
            ${this.popup()}
            <span class="mark">数量</span>
          </div>
          <div class="hsplit">${tri("down", "#1b2f66")}<i></i>${tri("down", "#1b2f66")}</div>
          <div class="bottom">
            <div class="left">
              <div class="strip"><span>主项:</span>${radios("main", ["全部", "一次", "药品", "非药", "已收"], 0)}</div>
              <div class="body">
                <div class="rows"><table class="grid" style=${total(ITEM_COLS)}>${cols(ITEM_COLS)}${this.header(ITEM_COLS)}
                  <tbody>${ITEMS.map((r, n) => html`<tr class=${n === 2 ? "cur" : ""}><td>药品</td><td>${r[0]}</td><td>${r[1]}</td></tr>`)}</tbody></table></div>
                <div class="vbar"><span class="top">${tri("up")}</span><span class="thumb"></span><span class="room"></span>${tri("down")}</div>
              </div>
              <div class="lbar">${tri("left")}<span class="thumb"></span>${tri("right")}</div>
            </div>
            <div class="right">
              <div class="strip"><span>附加:</span>${radios("extra", ["全部", "材料", "加收"], 0)}<button class="push">过滤</button><button class="push">刷新</button></div>
              <table class="grid" style=${total(EXTRA_COLS)}>${cols(EXTRA_COLS)}${this.header(EXTRA_COLS)}</table>
            </div>
          </div>
        </div>
      </div>
    </div>
    <svg class="arrow" width="670" height="270" viewBox="650 98 670 270"><path d="M654 105L669 101 667 105 790 152 1100 272 1316 362 1095 276 788 159 663 111 667 115z" fill="#ff2712"/></svg>`;
  }
}
